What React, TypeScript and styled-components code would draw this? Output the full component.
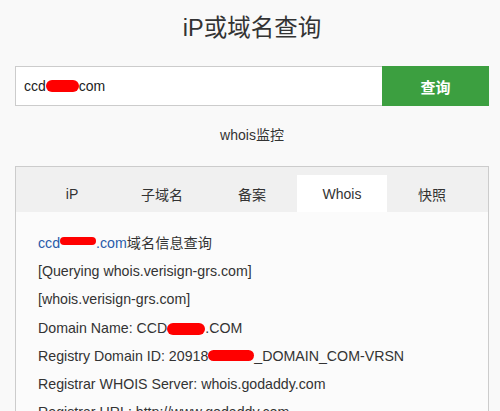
import React, {useState} from 'react'
import styled, {createGlobalStyle} from 'styled-components'

const GlobalStyle = createGlobalStyle`
  html, body {
    margin: 0;
    padding: 0;
    background-color: #f9f9f9;
    font-family: 'Liberation Sans', 'Noto Sans CJK SC', sans-serif;
    color: #333333;
  }
`

const Page = styled.div`
  display: flex;
  flex-direction: column;
  align-items: stretch;
  padding: 13px 11px 0 15px;
  & > * {
    flex-shrink: 0;
  }
`

const Title = styled.h1`
  margin: 0;
  text-align: center;
  font-size: 23.5px;
  line-height: 30px;
  font-weight: 400;
  color: #333333;
`

const SearchRow = styled.form`
  display: flex;
  height: 40px;
  margin-top: 23px;
`

const SearchInput = styled.div`
  flex: 1;
  display: flex;
  align-items: center;
  padding-left: 8px;
  background-color: #ffffff;
  border: 1px solid #cccccc;
  border-right: none;
  font-size: 14px;
  color: #222222;
`

const SearchButton = styled.button`
  width: 107px;
  border: none;
  background-color: #3c9f40;
  color: #ffffff;
  font-family: 'Liberation Sans', 'Noto Sans CJK SC', sans-serif;
  font-size: 15px;
  font-weight: 600;
  cursor: pointer;
`

const Monitor = styled.div`
  margin-top: 19px;
  text-align: center;
  font-size: 14px;
  line-height: 20px;
`

const Panel = styled.div`
  margin-top: 21px;
  border: 1px solid #cccccc;
  background-color: #fbfbfb;
`

const TabBar = styled.div`
  display: flex;
  padding: 8px 11px 0;
  background-color: #f0f0f0;
`

const Tab = styled.div<{ $active?: boolean }>`
  width: 90px;
  height: 37px;
  display: flex;
  align-items: center;
  justify-content: center;
  font-size: 14px;
  color: #333333;
  background-color: ${({$active}) => ($active ? '#ffffff' : 'transparent')};
  cursor: pointer;
`

const Content = styled.div`
  padding: 17px 22px 0;
  font-size: 14.2px;
  line-height: 28.2px;
  color: #333333;
  .link{
    color: #2a5caa;
  }
  p{
    margin: 0;
    white-space: nowrap;
  }
`

const Redact = styled.span<{ $w: number, $h?: number, $up?: number }>`
  display: inline-block;
  width: ${({$w}) => $w}px;
  height: ${({$h}) => $h ?? 12}px;
  border-radius: 6px;
  background-color: #ff0000;
  vertical-align: middle;
  position: relative;
  top: ${({$up}) => -($up ?? 0)}px;
`

const tabs = ['iP', '子域名', '备案', 'Whois', '快照']

const App: React.FC = () => {
    const [active, setActive] = useState('Whois')

    return (
        <>
            <GlobalStyle/>
            <Page>
                <Title>iP或域名查询</Title>
                <SearchRow onSubmit={e => e.preventDefault()}>
                    <SearchInput>ccd<Redact $w={33}/>com</SearchInput>
                    <SearchButton type='submit'>查询</SearchButton>
                </SearchRow>
                <Monitor>whois监控</Monitor>
                <Panel>
                    <TabBar>
                        {tabs.map(t => (
                            <Tab key={t} $active={t === active} onClick={() => setActive(t)}>{t}</Tab>
                        ))}
                    </TabBar>
                    <Content>
                        <p><span className='link'>ccd<Redact $w={36} $h={8} $up={3}/>.com</span>域名信息查询</p>
                        <p>[Querying whois.verisign-grs.com]</p>
                        <p>[whois.verisign-grs.com]</p>
                        <p>Domain Name: CCD<Redact $w={38}/>.COM</p>
                        <p>Registry Domain ID: 20918<Redact $w={46} $h={11} $up={2}/>_DOMAIN_COM-VRSN</p>
                        <p>Registrar WHOIS Server: whois.godaddy.com</p>
                        <p>Registrar URL: http://www.godaddy.com</p>
                    </Content>
                </Panel>
            </Page>
        </>
    )
}

export default App
